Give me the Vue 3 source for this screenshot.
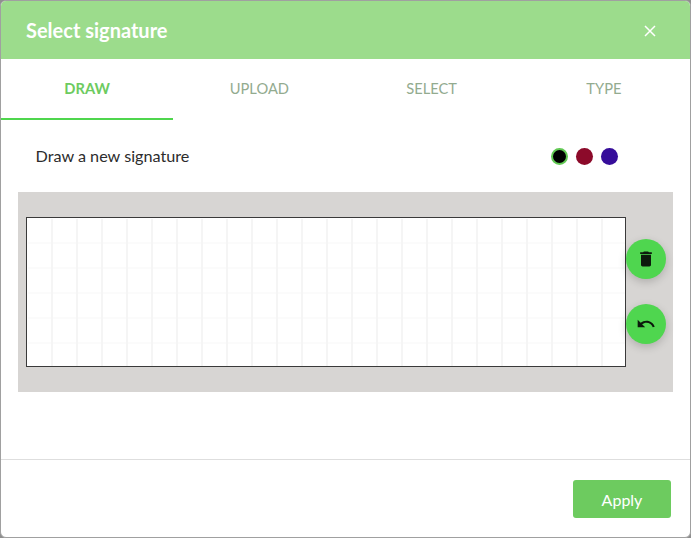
<script setup>
const tabs = [
  { label: 'DRAW', active: true },
  { label: 'UPLOAD', active: false },
  { label: 'SELECT', active: false },
  { label: 'TYPE', active: false },
]
</script>

<template>
  <div class="modal">
    <header class="head">
      <h1 class="title">Select signature</h1>
      <svg class="close" width="14" height="14" viewBox="0 0 14 14" aria-label="Close">
        <path d="M2 2 L12 12 M12 2 L2 12" stroke="#fff" stroke-width="1.5" fill="none" />
      </svg>
    </header>

    <nav class="tabs">
      <div v-for="t in tabs" :key="t.label" class="tab" :class="{ active: t.active }">{{ t.label }}</div>
    </nav>

    <div class="row">
      <span class="hint">Draw a new signature</span>
      <div class="dots">
        <span class="dot black"></span>
        <span class="dot red"></span>
        <span class="dot blue"></span>
      </div>
    </div>

    <section class="pad">
      <div class="canvas"></div>
      <div class="fabs">
        <button class="fab">
          <svg width="20" height="20" viewBox="0 0 24 24">
            <path d="M6 19c0 1.1.9 2 2 2h8c1.1 0 2-.9 2-2V7H6v12zM19 4h-3.5l-1-1h-5l-1 1H5v2h14V4z" fill="#0c1a0c" />
          </svg>
        </button>
        <button class="fab">
          <svg width="20" height="20" viewBox="0 0 24 24">
            <path d="M12.5 8c-2.65 0-5.05.99-6.9 2.6L2 7v9h9l-3.62-3.62c1.39-1.16 3.16-1.88 5.12-1.88 3.54 0 6.55 2.31 7.6 5.5l2.37-.78C21.08 11.03 17.15 8 12.5 8z" fill="#0c1a0c" />
          </svg>
        </button>
      </div>
    </section>

    <div class="spacer"></div>

    <footer class="foot">
      <button class="apply">Apply</button>
    </footer>
  </div>
</template>

<style>
html, body { margin: 0; background: #8f8f8f; }
</style>

<style scoped>
.modal {
  box-sizing: border-box;
  width: 691px;
  height: 538px;
  background: #fff;
  border: 1px solid #a0a0a0;
  border-radius: 6px;
  display: flex;
  flex-direction: column;
  overflow: hidden;
  font-family: Lato, sans-serif;
}
.head {
  height: 58px;
  flex: none;
  background: #9cdc8c;
  display: flex;
  align-items: center;
  justify-content: space-between;
  padding: 0 33px 0 25px;
}
.title {
  margin: 0;
  font-size: 20px;
  font-weight: 700;
  color: #fff;
}
.close { display: block; margin-top: 1px; }
.tabs {
  height: 61px;
  flex: none;
  display: grid;
  grid-template-columns: repeat(4, 1fr);
}
.tab {
  display: flex;
  align-items: center;
  justify-content: center;
  font-size: 14.7px;
  color: #93ab8f;
  padding-bottom: 2px;
  border-bottom: 2px solid transparent;
  box-sizing: border-box;
}
.tab.active {
  color: #6dcb5f;
  font-weight: 700;
  border-bottom-color: #4fd64d;
}
.row {
  height: 72px;
  flex: none;
  box-sizing: border-box;
  display: flex;
  align-items: center;
  justify-content: space-between;
  padding: 0 72px 0 34.5px;
}
.hint { font-size: 16.2px; color: #2c2c2c; margin-bottom: 1px; }
.dots { display: flex; gap: 8px; }
.dot {
  display: block;
  box-sizing: border-box;
  width: 17px;
  height: 17px;
  border-radius: 50%;
}
.black { background: #000; border: 2px solid #62c954; }
.red { background: #8c0a2a; }
.blue { background: #360d9a; }
.pad {
  height: 200px;
  flex: none;
  margin: 0 17px;
  padding: 25px 0 0 8px;
  box-sizing: border-box;
  background: #d7d5d3;
  display: flex;
  align-items: flex-start;
}
.canvas {
  box-sizing: border-box;
  width: 600px;
  height: 150px;
  flex: none;
  border: 1px solid #3a3a3a;
  background-color: #fff;
  background-image:
    linear-gradient(#fff, #fff),
    linear-gradient(#fff, #fff),
    linear-gradient(to right, #f5f5f5 2px, transparent 2px),
    linear-gradient(to bottom, #fbfbfb 2px, transparent 2px);
  background-size: 1px 100%, 100% 1px, 25px 25px, 25px 25px;
  background-position: 0 0, 0 0, -1px -1px, -1px -1px;
  background-repeat: no-repeat, no-repeat, repeat, repeat;
}
.fabs {
  display: flex;
  flex-direction: column;
  gap: 25px;
  margin-top: 22px;
}
.fab {
  width: 40px;
  height: 40px;
  padding: 0;
  border: 0;
  border-radius: 50%;
  background: #4fd64f;
  display: flex;
  align-items: center;
  justify-content: center;
  box-shadow: 0 3px 8px rgba(0, 0, 0, 0.18);
}
.spacer { flex: 1; }
.foot {
  height: 78px;
  flex: none;
  box-sizing: border-box;
  border-top: 1px solid #dedede;
  display: flex;
  justify-content: flex-end;
  align-items: flex-start;
  padding: 20px 19px 0 0;
}
.apply {
  width: 98px;
  height: 38px;
  border: 0;
  border-radius: 3px;
  background: #6dcb5f;
  color: #fff;
  font-family: Lato, sans-serif;
  font-size: 16px;
}
</style>
